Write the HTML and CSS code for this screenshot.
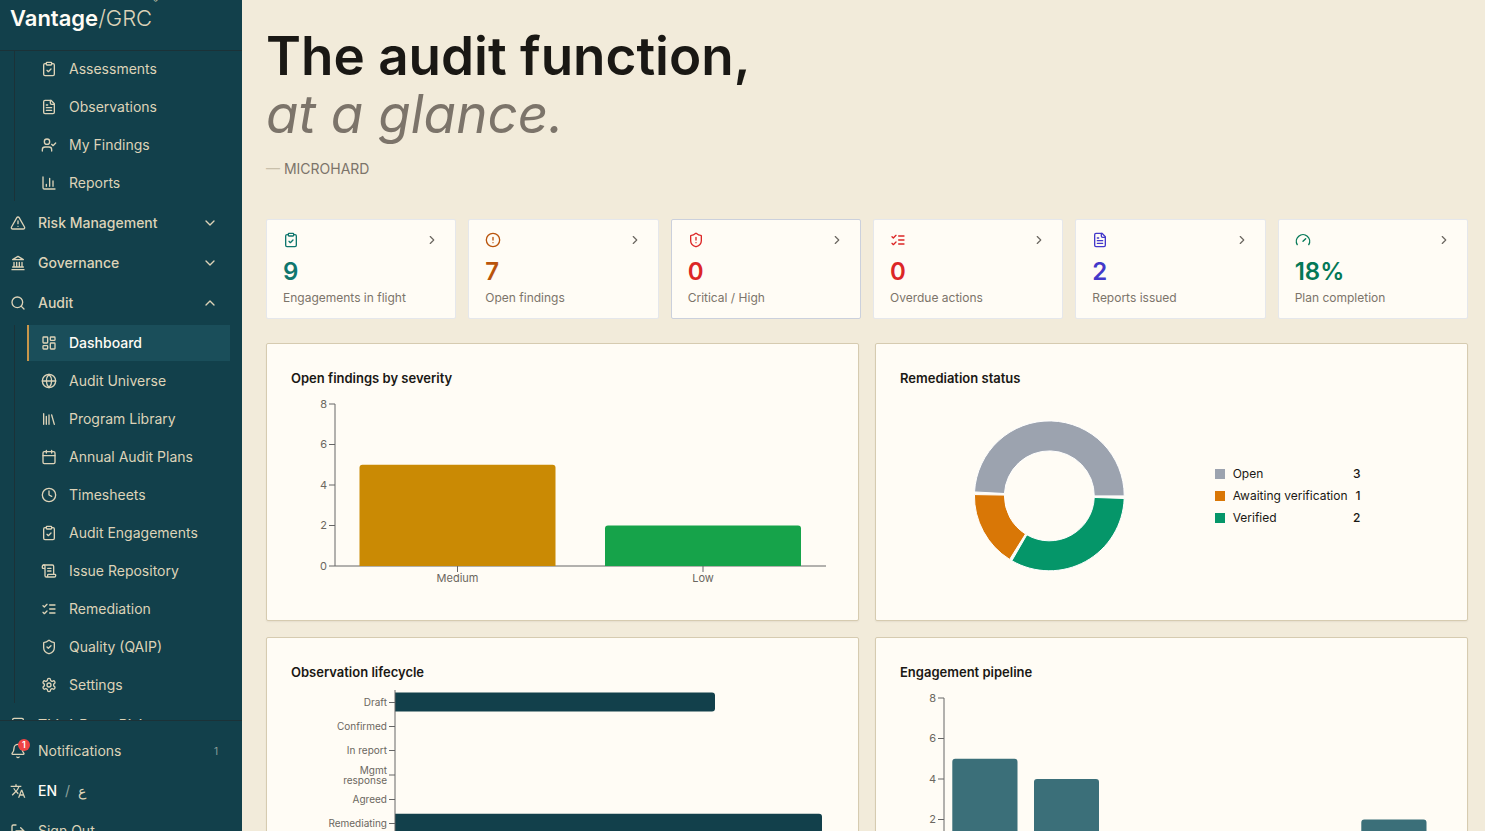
FILE: index.html
```html
<!DOCTYPE html>
<html lang="en">
<head>
<meta charset="utf-8">
<meta name="viewport" content="width=device-width, initial-scale=1">
<title>Vantage/GRC – Audit dashboard</title>
<link rel="stylesheet" href="styles.css">
</head>
<body>
<svg class="sprite" aria-hidden="true">
  <symbol id="clipboard-check" viewBox="0 0 24 24"><rect x="8" y="2" width="8" height="4" rx="1"/><path d="M16 4h2a2 2 0 0 1 2 2v14a2 2 0 0 1-2 2H6a2 2 0 0 1-2-2V6a2 2 0 0 1 2-2h2"/><path d="m9 14 2 2 4-4"/></symbol>
  <symbol id="file-text" viewBox="0 0 24 24"><path d="M15 2H6a2 2 0 0 0-2 2v16a2 2 0 0 0 2 2h12a2 2 0 0 0 2-2V7Z"/><path d="M14 2v4a2 2 0 0 0 2 2h4M10 9H8M16 13H8M16 17H8"/></symbol>
  <symbol id="user-check" viewBox="0 0 24 24"><path d="m16 11 2 2 4-4M16 21v-2a4 4 0 0 0-4-4H6a4 4 0 0 0-4 4v2"/><circle cx="9" cy="7" r="4"/></symbol>
  <symbol id="chart" viewBox="0 0 24 24"><path d="M3 3v16a2 2 0 0 0 2 2h16M18 17V9M13 17V5M8 17v-3"/></symbol>
  <symbol id="triangle-alert" viewBox="0 0 24 24"><path d="m21.73 18-8-14a2 2 0 0 0-3.48 0l-8 14A2 2 0 0 0 4 21h16a2 2 0 0 0 1.73-3M12 9v4M12 17h.01"/></symbol>
  <symbol id="landmark" viewBox="0 0 24 24"><path d="M3 22h18M6 18v-7M10 18v-7M14 18v-7M18 18v-7M4 18h16M12 2l8 5H4z"/></symbol>
  <symbol id="search" viewBox="0 0 24 24"><circle cx="11" cy="11" r="8"/><path d="m21 21-4.300-4.300"/></symbol>
  <symbol id="dashboard" viewBox="0 0 24 24"><rect x="3" y="3" width="7" height="9" rx="1"/><rect x="14" y="3" width="7" height="5" rx="1"/><rect x="14" y="12" width="7" height="9" rx="1"/><rect x="3" y="16" width="7" height="5" rx="1"/></symbol>
  <symbol id="globe" viewBox="0 0 24 24"><circle cx="12" cy="12" r="10"/><path d="M12 2a14.5 14.5 0 0 0 0 20 14.5 14.5 0 0 0 0-20M2 12h20"/></symbol>
  <symbol id="library" viewBox="0 0 24 24"><path d="m16 6 4 14M12 6v14M8 8v12M4 4v16"/></symbol>
  <symbol id="calendar" viewBox="0 0 24 24"><path d="M8 2v4M16 2v4M3 10h18"/><rect x="3" y="4" width="18" height="18" rx="2"/></symbol>
  <symbol id="clock" viewBox="0 0 24 24"><circle cx="12" cy="12" r="10"/><path d="M12 6v6l4 2"/></symbol>
  <symbol id="scroll" viewBox="0 0 24 24"><path d="M15 12h-5M15 8h-5M19 17V5a2 2 0 0 0-2-2H4"/><path d="M8 21h12a2 2 0 0 0 2-2v-1a1 1 0 0 0-1-1H11a1 1 0 0 0-1 1v1a2 2 0 1 1-4 0V5a2 2 0 1 0-4 0v2a1 1 0 0 0 1 1h3"/></symbol>
  <symbol id="list-checks" viewBox="0 0 24 24"><path d="m3 17 2 2 4-4M3 7l2 2 4-4M13 6h8M13 12h8M13 18h8"/></symbol>
  <symbol id="shield-check" viewBox="0 0 24 24"><path d="M20 13c0 5-3.5 7.500-7.660 8.950a1 1 0 0 1-.67-.01C7.500 20.500 4 18 4 13V6a1 1 0 0 1 1-1c2 0 4.500-1.200 6.240-2.720a1.170 1.170 0 0 1 1.520 0C14.510 3.810 17 5 19 5a1 1 0 0 1 1 1zM9 12l2 2 4-4"/></symbol>
  <symbol id="shield-alert" viewBox="0 0 24 24"><path d="M20 13c0 5-3.500 7.500-7.660 8.950a1 1 0 0 1-.67-.01C7.500 20.500 4 18 4 13V6a1 1 0 0 1 1-1c2 0 4.500-1.200 6.240-2.720a1.170 1.170 0 0 1 1.520 0C14.510 3.810 17 5 19 5a1 1 0 0 1 1 1zM12 8v4M12 16h.01"/></symbol>
  <symbol id="circle-alert" viewBox="0 0 24 24"><circle cx="12" cy="12" r="10"/><path d="M12 8v4M12 16h.01"/></symbol>
  <symbol id="gauge" viewBox="0 0 24 24"><path d="m12 14 4-4M3.340 19a10 10 0 1 1 17.320 0"/></symbol>
  <symbol id="settings" viewBox="0 0 24 24"><path d="M12.220 2h-.44a2 2 0 0 0-2 2v.18a2 2 0 0 1-1 1.730l-.43.25a2 2 0 0 1-2 0l-.15-.08a2 2 0 0 0-2.730.73l-.22.38a2 2 0 0 0 .73 2.730l.15.100a2 2 0 0 1 1 1.720v.510a2 2 0 0 1-1 1.740l-.15.090a2 2 0 0 0-.73 2.730l.22.380a2 2 0 0 0 2.730.730l.15-.080a2 2 0 0 1 2 0l.43.250a2 2 0 0 1 1 1.730V20a2 2 0 0 0 2 2h.44a2 2 0 0 0 2-2v-.180a2 2 0 0 1 1-1.730l.430-.250a2 2 0 0 1 2 0l.150.080a2 2 0 0 0 2.730-.730l.220-.390a2 2 0 0 0-.730-2.730l-.150-.080a2 2 0 0 1-1-1.740v-.500a2 2 0 0 1 1-1.740l.150-.090a2 2 0 0 0 .730-2.730l-.220-.380a2 2 0 0 0-2.730-.730l-.150.080a2 2 0 0 1-2 0l-.430-.250a2 2 0 0 1-1-1.730V4a2 2 0 0 0-2-2z"/><circle cx="12" cy="12" r="3"/></symbol>
  <symbol id="building" viewBox="0 0 24 24"><rect x="4" y="2" width="16" height="20" rx="2"/><path d="M9 22v-4h6v4M8 6h.01M16 6h.01M12 6h.01M12 10h.01M12 14h.01M16 10h.01M16 14h.01M8 10h.01M8 14h.01"/></symbol>
  <symbol id="bell" viewBox="0 0 24 24"><path d="M10.270 21a2 2 0 0 0 3.460 0M3.260 15.330A1 1 0 0 0 4 17h16a1 1 0 0 0 .74-1.670C19.410 13.960 18 12.500 18 8A6 6 0 0 0 6 8c0 4.500-1.410 5.960-2.740 7.330"/></symbol>
  <symbol id="translate" viewBox="0 0 24 24"><path fill="currentColor" stroke="none" d="m12.870 15.070-2.540-2.510.03-.03A17.520 17.520 0 0 0 14.070 6H17V4h-7V2H8v2H1v2h11.170C11.500 7.920 10.440 9.750 9 11.350 8.070 10.320 7.300 9.190 6.690 8h-2c.73 1.630 1.730 3.170 2.980 4.560l-5.090 5.020L4 19l5-5 3.110 3.110zM18.500 10h-2L12 22h2l1.120-3h4.750L21 22h2zm-2.620 7 1.620-4.330L19.120 17z"/></symbol>
  <symbol id="log-out" viewBox="0 0 24 24"><path d="m16 17 5-5-5-5M21 12H9M9 21H5a2 2 0 0 1-2-2V5a2 2 0 0 1 2-2h4"/></symbol>
  <symbol id="chevron-down" viewBox="0 0 24 24"><path d="m6 9 6 6 6-6"/></symbol>
  <symbol id="chevron-up" viewBox="0 0 24 24"><path d="m18 15-6-6-6 6"/></symbol>
  <symbol id="chevron-right" viewBox="0 0 24 24"><path d="m9 18 6-6-6-6"/></symbol>
</svg>

<div class="app">
  <aside class="sidebar">
    <div class="brand"><strong>Vantage</strong><span class="brand-suffix">/GRC</span><sup class="brand-mark">®</sup></div>
    <nav class="nav" aria-label="Main">
      <div class="subnav">
        <a class="subnav-item" href="#"><svg class="icon"><use href="#clipboard-check"/></svg>Assessments</a>
        <a class="subnav-item" href="#"><svg class="icon"><use href="#file-text"/></svg>Observations</a>
        <a class="subnav-item" href="#"><svg class="icon"><use href="#user-check"/></svg>My Findings</a>
        <a class="subnav-item" href="#"><svg class="icon"><use href="#chart"/></svg>Reports</a>
      </div>
      <button class="nav-item" type="button"><svg class="icon"><use href="#triangle-alert"/></svg>Risk Management<svg class="icon nav-end"><use href="#chevron-down"/></svg></button>
      <button class="nav-item" type="button"><svg class="icon"><use href="#landmark"/></svg>Governance<svg class="icon nav-end"><use href="#chevron-down"/></svg></button>
      <button class="nav-item" type="button" aria-expanded="true"><svg class="icon"><use href="#search"/></svg>Audit<svg class="icon nav-end"><use href="#chevron-up"/></svg></button>
      <div class="subnav">
        <a class="subnav-item is-active" href="#" aria-current="page"><svg class="icon"><use href="#dashboard"/></svg>Dashboard</a>
        <a class="subnav-item" href="#"><svg class="icon"><use href="#globe"/></svg>Audit Universe</a>
        <a class="subnav-item" href="#"><svg class="icon"><use href="#library"/></svg>Program Library</a>
        <a class="subnav-item" href="#"><svg class="icon"><use href="#calendar"/></svg>Annual Audit Plans</a>
        <a class="subnav-item" href="#"><svg class="icon"><use href="#clock"/></svg>Timesheets</a>
        <a class="subnav-item" href="#"><svg class="icon"><use href="#clipboard-check"/></svg>Audit Engagements</a>
        <a class="subnav-item" href="#"><svg class="icon"><use href="#scroll"/></svg>Issue Repository</a>
        <a class="subnav-item" href="#"><svg class="icon"><use href="#list-checks"/></svg>Remediation</a>
        <a class="subnav-item" href="#"><svg class="icon"><use href="#shield-check"/></svg>Quality (QAIP)</a>
        <a class="subnav-item" href="#"><svg class="icon"><use href="#settings"/></svg>Settings</a>
      </div>
      <button class="nav-item" type="button"><svg class="icon"><use href="#building"/></svg>Third-Party Risk</button>
    </nav>
    <div class="sidebar-footer">
      <button class="nav-item nav-item-plain" type="button"><span class="bell"><svg class="icon"><use href="#bell"/></svg><span class="badge">1</span></span>Notifications<span class="nav-end count">1</span></button>
      <button class="nav-item nav-item-plain" type="button"><svg class="icon"><use href="#translate"/></svg><span class="lang"><span class="lang-on">EN</span><span class="lang-sep">/</span><span lang="ar">ع</span></span></button>
      <button class="nav-item nav-item-plain" type="button"><svg class="icon"><use href="#log-out"/></svg>Sign Out</button>
    </div>
  </aside>

  <main class="main">
    <header class="hero">
      <h1 class="hero-title">The audit function,<br><em>at a glance.</em></h1>
      <p class="hero-org"><span class="hero-dash">—</span> MICROHARD</p>
    </header>

    <section class="kpis" aria-label="Key figures">
      <a class="kpi kpi-teal" href="#"><span class="kpi-top"><svg class="icon"><use href="#clipboard-check"/></svg><svg class="kpi-arrow"><use href="#chevron-right"/></svg></span><strong class="kpi-value">9</strong><span class="kpi-label">Engagements in flight</span></a>
      <a class="kpi kpi-orange" href="#"><span class="kpi-top"><svg class="icon"><use href="#circle-alert"/></svg><svg class="kpi-arrow"><use href="#chevron-right"/></svg></span><strong class="kpi-value">7</strong><span class="kpi-label">Open findings</span></a>
      <a class="kpi kpi-red is-hovered" href="#"><span class="kpi-top"><svg class="icon"><use href="#shield-alert"/></svg><svg class="kpi-arrow"><use href="#chevron-right"/></svg></span><strong class="kpi-value">0</strong><span class="kpi-label">Critical / High</span></a>
      <a class="kpi kpi-red" href="#"><span class="kpi-top"><svg class="icon"><use href="#list-checks"/></svg><svg class="kpi-arrow"><use href="#chevron-right"/></svg></span><strong class="kpi-value">0</strong><span class="kpi-label">Overdue actions</span></a>
      <a class="kpi kpi-indigo" href="#"><span class="kpi-top"><svg class="icon"><use href="#file-text"/></svg><svg class="kpi-arrow"><use href="#chevron-right"/></svg></span><strong class="kpi-value">2</strong><span class="kpi-label">Reports issued</span></a>
      <a class="kpi kpi-green" href="#"><span class="kpi-top"><svg class="icon"><use href="#gauge"/></svg><svg class="kpi-arrow"><use href="#chevron-right"/></svg></span><strong class="kpi-value">18%</strong><span class="kpi-label">Plan completion</span></a>
    </section>

    <section class="panels">
      <article class="panel">
        <h2 class="panel-title">Open findings by severity</h2>
        <svg class="chart" viewBox="0 0 543 200" role="img" aria-label="Open findings: Medium 5, Low 2">
          <path class="axis" d="M44 8V170M38 8h6M38 48.500h6M38 89h6M38 129.500h6M38 170H535M166.500 170v6M412 170v6"/>
          <path fill="#ca8a04" d="M68.500 170V71.750a3 3 0 0 1 3-3H261.500a3 3 0 0 1 3 3V170z"/>
          <path fill="#16a34a" d="M314 170v-37.500a3 3 0 0 1 3-3H507a3 3 0 0 1 3 3V170z"/>
          <g class="tick tick-end"><text x="36" y="12">8</text><text x="36" y="52">6</text><text x="36" y="93">4</text><text x="36" y="133">2</text><text x="36" y="174">0</text></g>
          <g class="tick tick-mid"><text x="166.500" y="186">Medium</text><text x="412" y="186">Low</text></g>
        </svg>
      </article>

      <article class="panel">
        <h2 class="panel-title">Remediation status</h2>
        <div class="status">
          <svg class="chart" viewBox="0 0 299 200" role="img" aria-label="Remediation status by count">
            <g stroke="#fff">
              <path fill="#9ca3af" d="M224.500 100A75 75 0 0 0 74.600 96.070L104.560 97.640A45 45 0 0 1 194.500 100z"/>
              <path fill="#d97706" d="M74.510 98.690A75 75 0 0 0 109.760 163.600L125.650 138.160A45 45 0 0 1 104.510 99.210z"/>
              <path fill="#059669" d="M112 164.950A75 75 0 0 0 224.450 102.620L194.470 101.570A45 45 0 0 1 127 138.970z"/>
            </g>
          </svg>
          <ul class="legend">
            <li class="legend-row"><span class="swatch swatch-open"></span>Open<span class="legend-value">3</span></li>
            <li class="legend-row"><span class="swatch swatch-awaiting"></span>Awaiting verification<span class="legend-value">1</span></li>
            <li class="legend-row"><span class="swatch swatch-verified"></span>Verified<span class="legend-value">2</span></li>
          </ul>
        </div>
      </article>

      <article class="panel">
        <h2 class="panel-title">Observation lifecycle</h2>
        <svg class="chart" viewBox="0 0 543 200" role="img" aria-label="Observations by lifecycle stage">
          <path fill="#12404b" d="M104 2.500H421a3 3 0 0 1 3 3V18.500a3 3 0 0 1-3 3H104zM104 123.700H528a3 3 0 0 1 3 3V140.100a3 3 0 0 1-3 3H104z"/>
          <path class="axis" d="M104 0V170M98 12.500h6M98 36.500h6M98 60.500h6M98 85h6M98 109.500h6M98 133.500h6"/>
          <g class="tick tick-end tick-small"><text x="96" y="16">Draft</text><text x="96" y="40">Confirmed</text><text x="96" y="64">In report</text><text x="96" y="84">Mgmt</text><text x="96" y="94">response</text><text x="96" y="113">Agreed</text><text x="96" y="137">Remediating</text></g>
        </svg>
      </article>

      <article class="panel">
        <h2 class="panel-title">Engagement pipeline</h2>
        <svg class="chart" viewBox="0 0 543 200" role="img" aria-label="Engagements by pipeline stage">
          <path class="axis" d="M44 8V170M38 8h6M38 48.500h6M38 89h6M38 129.500h6M38 170H535"/>
          <path fill="#3b6f79" d="M52.300 170V71.750a3 3 0 0 1 3-3H114.500a3 3 0 0 1 3 3V170zM134 170V92a3 3 0 0 1 3-3H196a3 3 0 0 1 3 3V170zM461.300 170v-37.500a3 3 0 0 1 3-3H523.500a3 3 0 0 1 3 3V170z"/>
          <g class="tick tick-end"><text x="36" y="12">8</text><text x="36" y="52">6</text><text x="36" y="93">4</text><text x="36" y="133">2</text><text x="36" y="174">0</text></g>
        </svg>
      </article>
    </section>
  </main>
</div>
</body>
</html>
```
FILE: styles.css
```css
:root {
  --teal-900: #12404b;
  --teal-800: #1a4e5a;
  --teal-line: #1b3238;
  --sand: #ddd3b8;
  --page: #f2ebda;
  --card: #fffcf5;
  --ink: #1a1814;
  --muted: #7c746a;
}

* { box-sizing: border-box; }

body {
  margin: 0;
  background: var(--page);
  color: var(--ink);
  font-family: Inter, "Noto Sans", sans-serif;
  font-size: 14px;
  line-height: 20px;
}

a { color: inherit; text-decoration: none; }

.sprite { display: none; }

.icon, .kpi-arrow {
  flex: none;
  width: 16px;
  height: 16px;
  fill: none;
  stroke: currentColor;
  stroke-width: 2;
  stroke-linecap: round;
  stroke-linejoin: round;
}

.app {
  display: grid;
  grid-template-columns: 242px minmax(0, 1fr);
  height: 100vh;
  overflow: hidden;
}

/* Sidebar */
.sidebar {
  display: flex;
  flex-direction: column;
  min-height: 0;
  background: var(--teal-900);
  color: var(--sand);
}

.brand {
  display: flex;
  flex: none;
  padding: 4px 10px 18px;
  border-bottom: 1px solid var(--teal-line);
  font-size: 22px;
  line-height: 28px;
}
.brand strong { color: #fffcf5; font-weight: 600; }
.brand-suffix { font-weight: 300; }
.brand-mark { margin: -7px 0 0 1px; font-size: 7px; line-height: 8px; }

.nav {
  display: flex;
  flex: 1;
  flex-direction: column;
  gap: 4px;
  min-height: 0;
  padding-right: 12px;
  overflow: hidden;
}

.nav-item {
  display: flex;
  flex: none;
  align-items: center;
  gap: 12px;
  width: 100%;
  height: 36px;
  padding: 0 12px 0 10px;
  border: 0;
  background: none;
  color: inherit;
  font: inherit;
  font-weight: 500;
  text-align: left;
}
.nav-item-plain { font-weight: 400; }
.nav-end { margin-left: auto; }

.subnav {
  display: flex;
  flex: none;
  flex-direction: column;
  gap: 2px;
  margin-left: 14px;
  padding-left: 12px;
  border-left: 1px solid var(--teal-line);
}
.subnav-item {
  display: flex;
  align-items: center;
  gap: 12px;
  height: 36px;
  padding-left: 12px;
  border-left: 2px solid transparent;
}
.subnav-item.is-active {
  border-left-color: #c8964a;
  background: var(--teal-800);
  color: #fffcf5;
  font-weight: 500;
}
.subnav-item.is-active .icon { color: var(--sand); }

.sidebar-footer {
  display: flex;
  flex: none;
  flex-direction: column;
  gap: 4px;
  max-height: 111px;
  padding: 12px 12px 0 0;
  border-top: 1px solid var(--teal-line);
  overflow: hidden;
}
.bell { position: relative; display: flex; }
.badge {
  position: absolute;
  top: -4px;
  right: -4px;
  width: 12px;
  height: 12px;
  border-radius: 50%;
  background: #ef4444;
  color: #fff;
  font-size: 9px;
  font-weight: 600;
  line-height: 12px;
  text-align: center;
}
.count { color: #8da09c; font-size: 10px; }
.lang { display: flex; gap: 8px; }
.lang-on { color: #fffcf5; font-weight: 500; }
.lang-sep { color: #8da09c; }

/* Main column */
.main { padding: 27px 17px 0 24px; overflow: hidden; }

.hero-title {
  margin: 0;
  font-size: 53px;
  font-weight: 600;
  line-height: 58px;
}
.hero-title em { color: var(--muted); font-weight: 400; }
.hero-org { margin: 16px 0 0; color: var(--muted); }
.hero-dash { color: #c9c0ab; }

.kpis {
  display: grid;
  grid-template-columns: repeat(6, minmax(0, 1fr));
  gap: 12px;
  margin-top: 40px;
}
.kpi {
  display: flex;
  flex-direction: column;
  padding: 12px 16px;
  border: 1px solid #e5e7eb;
  border-radius: 2px;
  background: var(--card);
}
.kpi.is-hovered { border-color: #cbd0dc; }
.kpi-top { display: flex; align-items: center; justify-content: space-between; }
.kpi-arrow { width: 14px; height: 14px; color: #6b6760; }
.kpi-value { margin-top: 8px; font-size: 24px; font-weight: 600; line-height: 32px; }
.kpi-label { margin-top: 2px; color: var(--muted); font-size: 12px; line-height: 16px; }
.kpi-teal { color: #0f766e; }
.kpi-orange { color: #b9540c; }
.kpi-red { color: #dc2626; }
.kpi-indigo { color: #4338ca; }
.kpi-green { color: #047857; }

.panels {
  display: grid;
  grid-template-columns: repeat(2, minmax(0, 1fr));
  gap: 16px;
  margin-top: 24px;
}
.panel {
  padding: 24px;
  border: 1px solid #d6cbb0;
  border-radius: 2px;
  background: var(--card);
  box-shadow: 0 1px 2px rgb(26 24 20 / 6%);
}
.panel-title { margin: 0 0 8px; font-size: 13px; font-weight: 600; line-height: 20px; }

.chart { display: block; width: 100%; }
.axis { fill: none; stroke: #666; }
.tick { fill: #6b6760; font-size: 11px; }
.tick-small { font-size: 10px; }
.tick-end { text-anchor: end; }
.tick-mid { text-anchor: middle; }

.status {
  display: grid;
  grid-template-columns: 55% max-content;
  gap: 16px;
  align-items: center;
}
.legend {
  display: grid;
  gap: 6px;
  margin: 0;
  padding: 0;
  font-size: 12px;
  line-height: 16px;
  list-style: none;
}
.legend-row { display: flex; align-items: center; gap: 8px; }
.legend-value { margin-left: auto; font-weight: 500; }
.swatch { width: 10px; height: 10px; }
.swatch-open { background: #9ca3af; }
.swatch-awaiting { background: #d97706; }
.swatch-verified { background: #059669; }
```
